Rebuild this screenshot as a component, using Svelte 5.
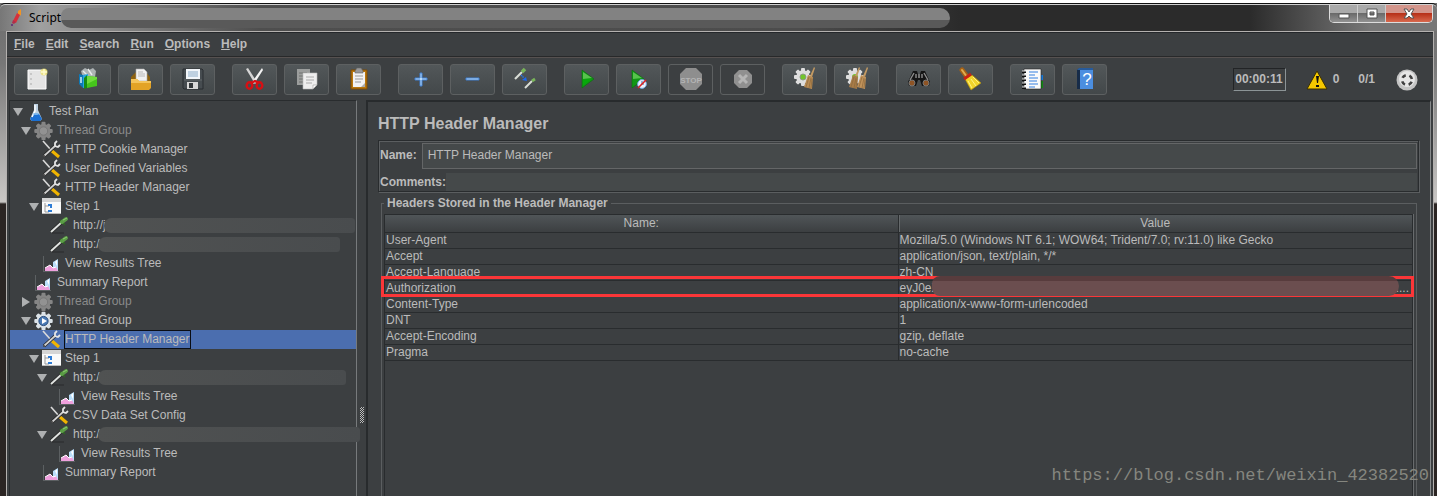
<script lang="ts">
	type Node = {
		label: string;
		depth: number;
		icon: string;
		open?: boolean;
		leaf?: boolean;
		disabled?: boolean;
		mask?: number;
	};

	const menus = ['File', 'Edit', 'Search', 'Run', 'Options', 'Help'];

	const toolbar = [
		['new', 'templates', 'open', 'save'],
		['cut', 'copy', 'paste'],
		['expand', 'collapse', 'toggle'],
		['start', 'start no pauses', 'stop', 'shutdown'],
		['clear', 'clear all'],
		['search', 'reset search'],
		['function helper', 'help']
	];

	const nodes: Node[] = [
		{ label: 'Test Plan', depth: 0, icon: 'flask', open: true },
		{ label: 'Thread Group', depth: 1, icon: 'gear-off', open: true, disabled: true },
		{ label: 'HTTP Cookie Manager', depth: 2, icon: 'tools', leaf: true },
		{ label: 'User Defined Variables', depth: 2, icon: 'tools', leaf: true },
		{ label: 'HTTP Header Manager', depth: 2, icon: 'tools', leaf: true },
		{ label: 'Step 1', depth: 2, icon: 'step', open: true },
		{ label: 'http://j', depth: 3, icon: 'pipette', leaf: true, mask: 251 },
		{ label: 'http:/', depth: 3, icon: 'pipette', leaf: true, mask: 242 },
		{ label: 'View Results Tree', depth: 2, icon: 'chart', leaf: true },
		{ label: 'Summary Report', depth: 1, icon: 'chart', leaf: true },
		{ label: 'Thread Group', depth: 1, icon: 'gear-off', disabled: true },
		{ label: 'Thread Group', depth: 1, icon: 'gear', open: true },
		{ label: 'HTTP Header Manager', depth: 2, icon: 'tools', leaf: true },
		{ label: 'Step 1', depth: 2, icon: 'step', open: true },
		{ label: 'http:/', depth: 3, icon: 'pipette', open: true, mask: 248 },
		{ label: 'View Results Tree', depth: 4, icon: 'chart', leaf: true },
		{ label: 'CSV Data Set Config', depth: 3, icon: 'tools', leaf: true },
		{ label: 'http:/', depth: 3, icon: 'pipette', open: true, mask: 262 },
		{ label: 'View Results Tree', depth: 4, icon: 'chart', leaf: true },
		{ label: 'Summary Report', depth: 2, icon: 'chart', leaf: true }
	];

	const headers = [
		['User-Agent', 'Mozilla/5.0 (Windows NT 6.1; WOW64; Trident/7.0; rv:11.0) like Gecko'],
		['Accept', 'application/json, text/plain, */*'],
		['Accept-Language', 'zh-CN'],
		['Authorization', 'eyJ0eX'],
		['Content-Type', 'application/x-www-form-urlencoded'],
		['DNT', '1'],
		['Accept-Encoding', 'gzip, deflate'],
		['Pragma', 'no-cache']
	];

	let selected = $state(12);
	let name = $state('HTTP Header Manager');
	let comments = $state('');

	const teeth = [0, 45, 90, 135, 180, 225, 270, 315];
</script>

{#snippet gear(cx, cy, r, fill)}
	<g {fill}>
		<circle {cx} {cy} r={r * 0.76} />
		{#each teeth as angle}
			<rect
				x={cx - r * 0.22}
				y={cy - r}
				width={r * 0.44}
				height={r * 0.5}
				rx="1"
				transform="rotate({angle} {cx} {cy})"
			/>
		{/each}
	</g>
{/snippet}

{#snippet straw(x, fill)}
	<path d="M{x + 10} 0L{x + 6} 9L{x + 8} 10L{x + 11} 1z" fill="#c49a62" />
	<path d="M{x + 4} 8L{x + 9} 10L{x + 8} 22L{x} 20z" {fill} />
	<path
		d="M{x + 5} 10L{x + 2} 20M{x + 7} 11L{x + 5} 21M{x + 8} 12L{x + 7} 21"
		stroke="#8c683b"
		stroke-width=".7"
	/>
{/snippet}

{#snippet toolIcon(icon)}
	<svg width="25" height="25" viewBox="0 0 25 25" fill="none" aria-hidden="true">
		{#if icon === 'new'}
			<path d="M4 3h18v19H4z" fill="#e4e4e4" stroke="#fff" />
			<path d="M7 6v2m0 3v2m0 3v2" stroke="#aaa" />
			<circle cx="20" cy="5" r="3.6" fill="#eee26b" opacity=".75" />
			<path d="M20 2v6M17 5h6" stroke="#fffbd0" stroke-width="1.4" />
		{:else if icon === 'templates'}
			<path d="M5 4l4-3 4 2 4-2 3 3-1 6-12 1z" fill="#adb3b4" />
			<path d="M7 4l4 4m1-6l4 6" stroke="#e9ecec" stroke-width="1.4" />
			<path d="M3 7l4 1v13l-4-4z" fill="#0d79b7" />
			<path d="M7 8l5-1v13l-5 1z" fill="#27a5df" />
			<path d="M5 10v6M9 11v6" stroke="#dff4fb" stroke-width="1.4" />
			<path d="M8 11l3-3v13l-3 1z" fill="#168a16" />
			<path d="M11 9l10 1v9l-10 2z" fill="#45c51c" />
			<path d="M11 9l10 1v2l-10 5z" fill="#70dc3d" />
		{:else if icon === 'open'}
			<path d="M3 10l5-5h10l4 5v9H3z" fill="#8d6210" />
			<path d="M8 2h8l3 3v9H8z" fill="#f2f2f2" stroke="#aaa" stroke-width=".6" />
			<path d="M10 5h5m-5 2h7m-7 2h7" stroke="#aaa" stroke-width=".8" />
			<path d="M3 12h6l2 2h12v7l-2 2H3z" fill="#e3a325" />
			<path d="M3 12h6l2 2h12v2H3z" fill="#f4c45a" />
		{:else if icon === 'save'}
			<path d="M3 2h19l1 1v19H4l-1-1z" fill="#464c50" stroke="#292d30" />
			<path d="M6 2h14v10H6z" fill="#f2f6fa" />
			<path d="M8 5h10M8 7h10M8 9h10" stroke="#8cacc8" />
			<path d="M7 15h11v7H7z" fill="#d8d8d8" />
			<path d="M9 16h4v5H9z" fill="#34383b" />
			<path d="M4 13h18" stroke="#62686b" />
		{:else if icon === 'cut'}
			<path d="M4 2l2-1 9 14-2 2z" fill="#d6d6d6" />
			<path d="M20 1l1 2-9 14-2-2z" fill="#f4f4f4" />
			<ellipse cx="7.5" cy="18.5" rx="2.8" ry="3.2" stroke="#d51014" stroke-width="2.4" />
			<ellipse cx="17.5" cy="18.5" rx="2.8" ry="3.2" stroke="#d51014" stroke-width="2.4" />
			<path d="M9 16l4-2 4 2" stroke="#d51014" stroke-width="2.4" />
		{:else if icon === 'copy'}
			<path d="M3 2h13v16H3z" fill="#9b9d9c" />
			<path d="M5 6h8m-8 3h8m-8 3h8m-8 3h8" stroke="#6e716f" />
			<path d="M9 6h14v12l-4 4H9z" fill="#eee" stroke="#bbb" stroke-width=".6" />
			<path d="M12 10h8m-8 3h8m-8 3h6" stroke="#aaa" />
			<path d="M23 18h-4v4z" fill="#fff" stroke="#999" stroke-width=".6" />
		{:else if icon === 'paste'}
			<path d="M5 3h16v19H5z" fill="#b9770d" stroke="#7e4d05" />
			<path d="M7 5h12v15H7z" fill="#f2f2f2" />
			<path d="M9 4l2-3h4l2 3v2H9z" fill="#999" stroke="#666" stroke-width=".6" />
			<path d="M9 9h8m-8 3h8m-8 3h6" stroke="#999" />
			<path d="M19 16v4h-4z" fill="#aaa" />
		{:else if icon === 'expand'}
			<path d="M12 6h2v5h5v2h-5v6h-2v-6H7v-2h5z" fill="#b9daf8" stroke="#3f7fd0" />
		{:else if icon === 'collapse'}
			<path d="M6 11h13v2H6z" fill="#b9daf8" stroke="#3f7fd0" />
		{:else if icon === 'toggle'}
			<path d="M3 12l7-7" stroke="#d9ddd7" stroke-width="2.2" />
			<path d="M10 5l3-3" stroke="#79b45a" stroke-width="3.6" />
			<path d="M13 21l7-7" stroke="#d9ddd7" stroke-width="2" />
			<path d="M20 14l3-2" stroke="#79b45a" stroke-width="2.8" />
			<path d="M9 8l3 3" stroke="#2678e8" stroke-width="1.4" stroke-dasharray="1.5 .6" />
			<path d="M15 14l-5-1 4-3z" fill="#1d68ee" />
		{:else if icon === 'start'}
			<path d="M8 3v18l12-9z" fill="#119615" stroke="#0a6e0d" stroke-width=".6" />
			<path d="M9 5v7l9-1z" fill="#57c24c" />
			<path d="M9 12v7l9-7z" fill="#07a90b" />
		{:else if icon === 'start no pauses'}
			<path d="M6 3v18l12-9z" fill="#119615" stroke="#0a6e0d" stroke-width=".6" />
			<path d="M7 5v7l9-1z" fill="#57c24c" />
			<circle cx="16" cy="17" r="4.4" fill="#e9f2fd" stroke="#6ea4dd" />
			<path d="M16 17v-3m0 3h2" stroke="#3b6ba5" />
			<path d="M12 21l8-8" stroke="#dc2020" stroke-width="1.6" />
		{:else if icon === 'stop'}
			<path d="M8 1h10l6 6v10l-6 6H8l-6-6V7z" fill="#8e8e8e" />
			<text x="13" y="16" text-anchor="middle" class="stop-text">STOP</text>
		{:else if icon === 'shutdown'}
			<path d="M9 3h8l5 5v8l-5 5H9l-5-5V8z" fill="#909090" />
			<path d="M9 8l8 8m0-8l-8 8" stroke="#b5b5b5" stroke-width="3" />
		{:else if icon === 'clear'}
			{@render gear(11, 10, 9, '#dedede')}
			<circle cx="11" cy="10" r="3" fill="#72c52c" stroke="#8b9b82" />
			{@render straw(12, '#b88b53')}
		{:else if icon === 'clear all'}
			{@render gear(11, 10, 9, '#dedede')}
			<circle cx="11" cy="10" r="3" fill="#72c52c" />
			{@render straw(5, '#a87c48')}
			{@render straw(13, '#c0925a')}
		{:else if icon === 'search'}
			<path d="M7 4h4l1 3h2l1-3h4l5 11-1 4h-7l-2-6h-2l-2 6H3l-1-4z" fill="#151515" />
			<path d="M8 6L4 13m14-7l4 7M10 7v4m6-4v4" stroke="#8d8d8d" stroke-width="1.4" />
			<circle cx="6" cy="16" r="3" fill="#8e5425" stroke="#777" />
			<circle cx="20" cy="16" r="3" fill="#8e5425" stroke="#777" />
			<path d="M12 7h2v4h-2z" fill="#747474" />
		{:else if icon === 'reset search'}
			<path d="M4 3l6 8" stroke="#a66115" stroke-width="5" stroke-linecap="round" />
			<path d="M4 3l5 7" stroke="#e0ad51" stroke-width="2" stroke-linecap="round" />
			<path d="M7 12l7-4 9 8-10 7z" fill="#f1d329" stroke="#b49008" stroke-width=".6" />
			<path d="M10 14l4 7m-1-9l5 7m-3-9l6 6" stroke="#fff283" />
			<path d="M6 12l7-5" stroke="#c82214" stroke-width="3" />
		{:else if icon === 'function helper'}
			<path d="M19 8h4v5h-4z" fill="#1777d4" />
			<path d="M19 14h4v7h-4z" fill="#128312" />
			<path d="M4 2h17v20H4z" fill="#fafafa" stroke="#222" stroke-width=".6" />
			<path d="M9 5h9m-9 3h6m-6 3h9m-9 3h8m-8 3h9m-9 3h6" stroke="#337ee0" />
			<path d="M2 5h4M2 9h4m-4 4h4m-4 4h4m-4 4h4" stroke="#111" stroke-width="2" />
			<path d="M2 4h4M2 8h4m-4 4h4m-4 4h4m-4 4h4" stroke="#ddd" />
		{:else if icon === 'help'}
			<path d="M5 3l3-2v21H5z" fill="#172c49" />
			<path d="M8 2h13v20H8z" fill="#4b8ee0" />
			<path d="M5 3l2-2h14v2z" fill="#275b9c" />
			<text x="15" y="18" text-anchor="middle" class="help-text">?</text>
		{/if}
	</svg>
{/snippet}

{#snippet treeIcon(icon)}
	<svg width="20" height="19" viewBox="0 0 20 19" fill="none" aria-hidden="true">
		{#if icon === 'flask'}
			<path d="M9 2h4v6l4 9-2 2H7l-2-2 4-9z" fill="#bdd1e2" />
			<path d="M8 12h6l3 5-2 2H7l-2-2z" fill="#1a70d4" />
			<path d="M10 3v6l-3 6" stroke="#fff" stroke-width="1.4" />
			<ellipse cx="11" cy="12" rx="3" ry="1" fill="#77b5ed" />
		{:else if icon === 'gear'}
			{@render gear(10.5, 10, 9.2, '#dce3e8')}
			<circle cx="10.5" cy="10" r="4.6" fill="#4b7ab4" stroke="#2a4d7d" />
			<path d="M9 7v6l5-3z" fill="#fff" />
		{:else if icon === 'gear-off'}
			{@render gear(10.5, 10, 9.2, '#858585')}
			<circle cx="10.5" cy="10" r="4.2" fill="#929292" stroke="#777" />
		{:else if icon === 'tools'}
			<path d="M2 1l8 9" stroke="#dadada" stroke-width="1.6" />
			<path d="M11 11l7 6" stroke="#f0b400" stroke-width="3" />
			<path d="M3 16L14 6" stroke="#222" stroke-width="3.2" />
			<path d="M3 16L14 6" stroke="#d0d0d0" stroke-width="1.8" />
			<path d="M16 1l-2 2v3l3 1 2-2" stroke="#e4e4e4" stroke-width="1.8" />
			<circle cx="3" cy="16" r="1" fill="#444" />
		{:else if icon === 'step'}
			<path d="M1 1h19v16H1z" fill="#fafafa" />
			<path d="M1 1h19v4H1z" fill="#d5d5d5" />
			<path d="M4 6v9h4M4 9h4" stroke="#999" />
			<path d="M7 7h4v2H7zm2 2h2v2H9zm-2 4h4v2H7z" fill="#2e7cd5" />
			<path d="M1 16.5h19" stroke="#bbb" />
		{:else if icon === 'pipette'}
			<path d="M3 17h12" stroke="#292b2c" />
			<path d="M2 16L13 6" stroke="#222" stroke-width="3.4" />
			<path d="M2 16L13 6" stroke="#dfe2e0" stroke-width="2" />
			<path d="M11 4l5 5" stroke="#315f28" stroke-width="2" />
			<path d="M13 6l4-3" stroke="#5a9d45" stroke-width="4" stroke-linecap="round" />
			<path d="M14 4l4-2" stroke="#8fcb74" />
		{:else if icon === 'chart'}
			<path d="M2.5 2v16M2 17.5h16" stroke="#5c6062" />
			<path d="M12 8l5-3v12h-5z" fill="#b9defa" />
			<path d="M14 8l2-2v6z" fill="#fff" />
			<path d="M4 17v-3l5-3 3 3 3-1 2 4z" fill="#efa0dd" />
			<path d="M4 14l5-3 3 3 3-1" stroke="#fff" />
		{/if}
	</svg>
{/snippet}

<div class="window">
	<header class="titlebar">
		<svg class="pen" width="12" height="18" viewBox="0 0 12 18" aria-hidden="true">
			<path d="M8 2l3-2v6L8 8z" fill="#f29423" />
			<path d="M7 4l3 2-4 8-3-2z" fill="#d6303b" />
			<path d="M3 11l3 2-2 2-2-1z" fill="#b02e4b" />
			<circle cx="2" cy="16" r="1" fill="#5b2479" />
		</svg>
		<span class="title">Script</span>
		<span class="title-mask"></span>
		<div class="controls">
			<button aria-label="Minimize">
				<svg width="12" height="12" viewBox="0 0 12 12">
					<path d="M1 6h10v4H1z" fill="#fff" stroke="#555" />
				</svg>
			</button>
			<button aria-label="Maximize">
				<svg width="12" height="12" viewBox="0 0 12 12">
					<path d="M1 1h10v9H1zM4 4v3h4V4z" fill="#fff" fill-rule="evenodd" stroke="#555" />
				</svg>
			</button>
			<button class="close" aria-label="Close">
				<svg width="12" height="12" viewBox="0 0 12 12">
					<path d="M1 1h3l2 3 2-3h3L8 6l3 4H8L6 8l-2 2H1l3-4z" fill="#fff" stroke="#555" />
				</svg>
			</button>
		</div>
	</header>

	<div class="client">
		<nav class="menubar">
			{#each menus as menu}
				<button><u>{menu[0]}</u>{menu.slice(1)}</button>
			{/each}
		</nav>

		<div class="toolbar">
			{#each toolbar as group}
				<div class="group">
					{#each group as tool}
						<button aria-label={tool} disabled={tool === 'stop' || tool === 'shutdown'}>
							{@render toolIcon(tool)}
						</button>
					{/each}
				</div>
			{/each}
			<div class="status">
				<span class="timer">00:00:11</span>
				<span class="warnings">
					<svg width="22" height="20" viewBox="0 0 22 20" aria-hidden="true">
						<path d="M11 1l10 18H1z" fill="#f5c800" stroke="#3b3000" />
						<path d="M10 6h3l-1 7h-1zM10 15h3v2h-3z" fill="#111" />
					</svg>
					0
				</span>
				<span class="threads">0/1</span>
				<svg width="22" height="22" viewBox="0 0 22 22" aria-hidden="true">
					<circle cx="11" cy="11" r="10.5" fill="#c4c4c4" />
					<circle cx="11" cy="10" r="8" fill="#e6e6e6" />
					<circle
						cx="11"
						cy="11"
						r="5"
						fill="none"
						stroke="#404040"
						stroke-width="2.6"
						stroke-dasharray="4 3.854"
						stroke-dashoffset="-1.927"
					/>
				</svg>
			</div>
		</div>

		<div class="split">
			<ul class="tree">
				{#each nodes as node, i}
					<li class:selected={i === selected} style:--depth={node.depth}>
						{#if node.leaf}
							<span class="arrow"></span>
						{:else}
							<button class="arrow" aria-label="Toggle {node.label}">
								<svg width="10" height="10" viewBox="0 0 10 10">
									<path d={node.open ? 'M0 1h10L5 9z' : 'M1 0v10l8-5z'} fill="#aeb0b1" />
								</svg>
							</button>
						{/if}
						{@render treeIcon(node.icon)}
						<button class="label" class:disabled={node.disabled} onclick={() => (selected = i)}>
							{node.label}
						</button>
						{#if node.mask}
							<span class="mask" style:width="{node.mask}px"></span>
						{/if}
					</li>
				{/each}
			</ul>

			<div class="divider"><span></span></div>

			<main>
				<h1>HTTP Header Manager</h1>

				<div class="fields">
					<div class="field">
						<label for="name">Name:</label>
						<input id="name" type="text" bind:value={name} />
					</div>
					<div class="field comments">
						<label for="comments">Comments:</label>
						<input id="comments" type="text" bind:value={comments} />
					</div>
				</div>

				<fieldset>
					<legend>Headers Stored in the Header Manager</legend>
					<div class="scroll">
						<table>
							<thead>
								<tr><th>Name:</th><th>Value</th></tr>
							</thead>
							<tbody>
								{#each headers as [key, value]}
									<tr class:marked={key === 'Authorization'}>
										<td>{key}</td>
										<td>
											{value}
											{#if key === 'Authorization'}
												<span class="more">....</span>
												<span class="value-mask"></span>
											{/if}
										</td>
									</tr>
								{/each}
							</tbody>
						</table>
					</div>
				</fieldset>
			</main>
		</div>
	</div>

	<span class="watermark">https://blog.csdn.net/weixin_42382520</span>
</div>

<style>
	:global(body) {
		background: #fff;
	}

	.window {
		position: relative;
		box-sizing: border-box;
		min-height: 100vh;
		padding: 0 3px 0 6px;
		border-top: 3px solid #fff;
		display: flex;
		flex-direction: column;
		background: linear-gradient(#6d6d6d, #777 60px, #c9c7c5 199px, #2b2523 201px);
		color: #bbb;
		font: 12px/15px 'Liberation Sans', Arial, sans-serif;
	}

	button {
		padding: 0;
		border: 0;
		background: none;
		color: inherit;
		font: inherit;
	}

	.titlebar {
		display: flex;
		align-items: center;
		height: 28px;
		margin: 0 -3px 0 -6px;
		padding: 0 4px 0 10px;
		box-sizing: border-box;
		border-top: 1px solid #111;
		border-radius: 5px 5px 0 0;
		box-shadow: inset 0 1px #d0d0d0;
		background: linear-gradient(
			90deg,
			#777,
			#a0a0a0 40px,
			#858585 110px,
			#4e4e4e 260px,
			#4c4c4c 800px,
			#2b2b2b 960px,
			#2b2b2b 1250px,
			#777 1370px
		);
	}

	.title {
		margin-left: 7px;
		color: #000;
		font: 12px/18px 'Noto Sans', sans-serif;
	}

	.title-mask {
		flex: 0 1 889px;
		height: 20px;
		margin-right: auto;
		border-radius: 8px 10px 10px 10px;
		background: linear-gradient(#828282 12px, #595959 12px);
	}

	.controls {
		display: flex;
		align-self: flex-start;
		margin-top: 1px;
		border: 1px solid #ddd;
		border-top: 0;
		border-radius: 0 0 5px 5px;
		overflow: hidden;
	}

	.controls button {
		width: 28px;
		height: 17px;
		display: grid;
		place-items: center;
		border-right: 1px solid #ccc;
		background: linear-gradient(#aaa 8px, #686868 8px, #929292);
	}

	.controls .close {
		width: 46px;
		border: 0;
		background: linear-gradient(#d3958b 8px, #b52e16 8px, #d9694e);
	}

	.client {
		flex: 1;
		display: flex;
		flex-direction: column;
		border: 1px solid #b4b1af;
		border-bottom: 0;
		box-shadow: inset 0 1px #24272a;
		background: #3c3f41;
	}

	.menubar {
		display: flex;
		gap: 11px;
		padding: 5px 7px 4px;
		font-weight: bold;
		border-bottom: 1px solid #28292a;
	}

	.toolbar {
		display: flex;
		align-items: center;
		gap: 17px;
		padding: 6px 15px 5px 7px;
		border-top: 1px solid #565150;
	}

	.group {
		display: flex;
		gap: 7px;
	}

	.group button {
		box-sizing: border-box;
		width: 45px;
		height: 31px;
		display: grid;
		place-items: center;
		border: 1px solid #5d6061;
		border-radius: 3px;
		background: linear-gradient(#525759, #43484a);
	}

	.group button:disabled {
		background: none;
	}

	.stop-text {
		fill: #b4b4b4;
		font: bold 8px 'Liberation Sans', sans-serif;
	}

	.help-text {
		fill: #fff;
		font: 17px 'Liberation Sans', sans-serif;
	}

	.status {
		display: flex;
		align-items: center;
		margin-left: auto;
		font-weight: bold;
	}

	.timer {
		padding: 2px 2px 3px 1px;
		border: 1px solid;
		border-color: #222426 #8c9496 #8c9496 #222426;
		line-height: 16px;
	}

	.warnings {
		display: flex;
		align-items: center;
		gap: 5px;
		margin: 0 19px 0 20px;
	}

	.threads {
		margin-right: 21px;
	}

	.split {
		flex: 1;
		display: flex;
	}

	.tree {
		flex: none;
		width: 346px;
		margin: 0 0 0 2px;
		padding: 1px 0 0;
		list-style: none;
		border: solid #292c2e;
		border-width: 1px 0 0 1px;
		border-right: 1px solid #777a7c;
	}

	.tree li {
		display: flex;
		align-items: center;
		height: 19px;
		padding-left: calc(var(--depth) * 8px);
	}

	.tree svg {
		flex: none;
	}

	.tree .selected {
		background: #4b6eaf;
	}

	.arrow {
		flex: none;
		width: 15px;
		height: 19px;
		display: grid;
		place-items: center;
	}

	.label {
		margin-left: 3px;
		height: 19px;
		border: 1px solid transparent;
		white-space: nowrap;
	}

	.selected .label {
		border-color: #0a0d14;
	}

	.disabled {
		color: #8a8a8a;
	}

	.mask {
		flex: none;
		position: relative;
		z-index: 1;
		height: 15px;
		margin-left: -3px;
		border-radius: 9px 4px 4px 8px;
		background: linear-gradient(90deg, #505252, #494c4e);
	}

	.divider {
		flex: none;
		display: flex;
		justify-content: center;
		width: 9px;
	}

	.divider span {
		width: 4px;
		height: 16px;
		margin-top: 307px;
		background: repeating-conic-gradient(#bbb 0 25%, #303335 0 50%) 0 0 / 2px 2px;
	}

	main {
		flex: 1;
		min-width: 0;
		display: flex;
		flex-direction: column;
		margin-right: 2px;
		padding: 12px 11px 0 10px;
		border: solid #282b2d;
		border-width: 2px 1px 0 2px;
		border-right-color: #888b8c;
	}

	h1 {
		margin: 0 0 6px;
		font-size: 16px;
		line-height: 20px;
	}

	.fields {
		padding: 2px 1px 0;
		border: 1px solid #292c2e;
		box-shadow:
			1px 1px #5b5e60,
			inset 1px 1px #5b5e60;
	}

	.field {
		display: flex;
		align-items: center;
		gap: 5px;
		font-weight: bold;
	}

	.field label {
		padding-bottom: 2px;
	}

	input {
		flex: 1;
		min-width: 0;
		box-sizing: border-box;
		height: 26px;
		padding: 0 5px 2px;
		border: 1px solid #646667;
		outline: 0;
		background: #45494a;
		color: inherit;
		font: inherit;
		font-weight: normal;
	}

	.comments {
		gap: 0;
		margin-top: 4px;
	}

	.comments label {
		padding: 0;
	}

	.comments input {
		height: 18px;
		border: 0;
	}

	fieldset {
		flex: 1;
		display: flex;
		min-width: 0;
		margin: 3px 2px 0 3px;
		padding: 3px 3px 0 2px;
		border: 1px solid #5b5e60;
		border-bottom: 0;
	}

	legend {
		padding: 0 3px;
		line-height: 16px;
		font-weight: bold;
	}

	.scroll {
		flex: 1;
		min-width: 0;
		border: solid #292c2e;
		border-width: 1px 1px 0;
		box-shadow: 1px 0 #686b6d;
	}

	table {
		width: 100%;
		table-layout: fixed;
		border-spacing: 0;
	}

	th,
	td {
		height: 15px;
		padding: 0 1px;
		border: solid #292c2e;
		border-width: 0 1px 1px 0;
		text-align: left;
		font-weight: normal;
		line-height: 15px;
	}

	th {
		height: 17px;
		text-align: center;
		background: linear-gradient(#505558, #3c3f41);
	}

	th:last-child,
	td:last-child {
		border-right: 0;
	}

	th + th {
		box-shadow: inset 1px 0 #65696b;
	}

	.marked {
		position: relative;
	}

	/* annotation frame drawn over the neighbouring rows */
	.marked td:first-child::after {
		content: '';
		position: absolute;
		inset: -5px -2px 0 -4px;
		border: 3px solid #fb3638;
	}

	.more {
		float: right;
		margin-right: 2px;
	}

	.value-mask {
		position: absolute;
		z-index: 1;
		inset: -5px 13px 1px 547px;
		border-radius: 8px 10px 10px 8px;
		background: linear-gradient(#583c3d 5px, #6b4e4f 5px);
	}

	.watermark {
		position: absolute;
		right: 8px;
		bottom: 9px;
		color: #85867f;
		font: 17px/22px 'Liberation Mono', monospace;
	}
</style>
